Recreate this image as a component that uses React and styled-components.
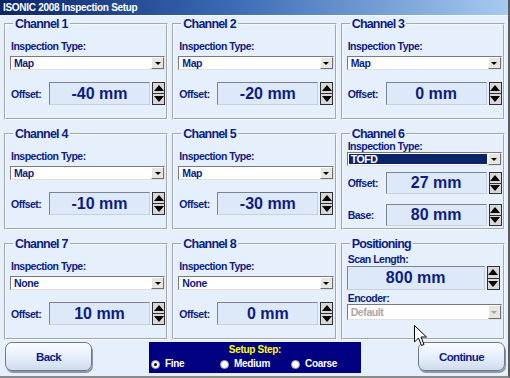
import React from 'react';
import styled, { createGlobalStyle } from 'styled-components';

const Global = createGlobalStyle`
  html, body { margin: 0; padding: 0; background: #e6effc; }
  body { width: 510px; height: 378px; overflow: hidden; font-family: "Liberation Sans", Arial, sans-serif; }
  * { box-sizing: border-box; }
`;

const NAVY = '#0c1c84';

const Window = styled.div`
  position: relative;
  width: 510px;
  height: 378px;
  display: flex;
  flex-direction: column;
  background: #e6effc;
  border-right: 2px solid #5a5a5a;
  border-bottom: 2px solid #8a8a8a;
`;

const TitleBar = styled.div`
  height: 16px;
  padding-left: 3px;
  background: linear-gradient(to right, #0a246a 0%, #3a6ab4 45%, #a6caf0 100%);
  color: #fff;
  font-size: 10px;
  letter-spacing: -0.3px;
  font-weight: bold;
  line-height: 16px;
  border-bottom: 1px solid #f4f8ff;
`;

const Grid = styled.div`
  display: grid;
  grid-template-columns: repeat(3, 1fr);
  grid-template-rows: repeat(3, 102px);
  column-gap: 4px;
  row-gap: 8px;
  padding: 2px 3px 0 4px;
`;

const Group = styled.fieldset`
  margin: 0;
  min-width: 0;
  padding: 0 1px 0 4px;
  border: 2px groove #f6f9ff;
  display: flex;
  flex-direction: column;
`;

const Legend = styled.legend`
  margin-left: 3px;
  padding: 0 2px;
  font-size: 12.5px;
  letter-spacing: -0.8px;
  line-height: 12px;
  font-weight: bold;
  color: ${NAVY};
`;

const Label = styled.div`
  padding-left: 1px;
  margin-top: ${p => p.$mt || 0}px;
  font-size: 10.5px;
  letter-spacing: -0.5px;
  line-height: 12px;
  font-weight: bold;
  color: ${NAVY};
  white-space: nowrap;
`;

const Select = styled.div`
  margin-top: ${p => p.$mt || 0}px;
  height: ${p => p.$h || 14}px;
  display: flex;
  align-items: stretch;
  background: #fff;
  border-top: 1px solid #7a7a7a;
  border-left: 1px solid #7a7a7a;
  border-right: 1px solid #e0e0e0;
  border-bottom: 1px solid #e0e0e0;
`;

const SelectText = styled.div`
  flex: 1;
  margin: 1px;
  padding-left: 2px;
  font-size: 10.5px;
  letter-spacing: -0.4px;
  line-height: ${p => p.$lh || 11}px;
  font-weight: bold;
  color: ${p => (p.$disabled ? '#a8a8a8' : p.$selected ? '#fff' : NAVY)};
  background: ${p => (p.$selected ? '#0a246a' : 'transparent')};
`;

const DropButton = styled.div`
  width: 13px;
  display: flex;
  align-items: center;
  justify-content: center;
  background: #e8e6e0;
  border-top: 1px solid #fff;
  border-left: 1px solid #fff;
  border-right: 1px solid #707070;
  border-bottom: 1px solid #707070;
  &::after {
    content: '';
    border-left: 3px solid transparent;
    border-right: 3px solid transparent;
    border-top: 3px solid ${p => (p.$disabled ? '#a0a0a0' : '#000')};
  }
`;

const ValueRow = styled.div`
  margin-top: ${p => p.$mt || 0}px;
  display: grid;
  grid-template-columns: ${p => (p.$label ? '37px 101px 13px' : '138px 13px')};
  column-gap: 2px;
  align-items: center;
`;

const ValueBox = styled.div`
  height: ${p => p.$h || 23}px;
  background: #dde8f8;
  border-top: 1px solid #7c8494;
  border-left: 1px solid #7c8494;
  border-right: 1px solid #c8d0dc;
  border-bottom: 1px solid #c8d0dc;
  display: flex;
  align-items: center;
  justify-content: center;
  font-size: 16px;
  font-weight: bold;
  color: ${NAVY};
`;

const Spinner = styled.div`
  height: ${p => p.$h || 23}px;
  display: flex;
  flex-direction: column;
  border: 1px solid #303030;
  background: #303030;
  gap: 1px;
`;

const SpinBtn = styled.div`
  flex: 1;
  display: flex;
  align-items: center;
  justify-content: center;
  background: #d8d8d8;
  &::after {
    content: '';
    border-left: 5px solid transparent;
    border-right: 5px solid transparent;
    ${p => (p.$down ? 'border-top: 6px solid #000;' : 'border-bottom: 6px solid #000;')}
  }
`;

const Bottom = styled.div`
  display: flex;
  justify-content: space-between;
  align-items: flex-start;
  padding: 2px 3px 0 5px;
`;

const Button = styled.div`
  width: 87px;
  height: 29px;
  border: 1px solid #6e7888;
  border-radius: 7px;
  background: linear-gradient(to bottom, #fbfdff 0%, #e6effc 50%, #cfdcee 100%);
  box-shadow: 1px 2px 0 #8f96a0;
  display: flex;
  align-items: center;
  justify-content: center;
  font-size: 11.5px;
  letter-spacing: -0.6px;
  font-weight: bold;
  color: ${NAVY};
`;

const StepPanel = styled.div`
  width: 212px;
  height: 31px;
  background: #000080;
  display: flex;
  flex-direction: column;
  padding: 2px 0 0 2px;
`;

const StepTitle = styled.div`
  text-align: center;
  font-size: 10px;
  letter-spacing: -0.3px;
  line-height: 11px;
  font-weight: bold;
  color: #ffff00;
  padding-right: 2px;
`;

const Radios = styled.div`
  margin-top: 3px;
  display: grid;
  grid-template-columns: 69px 71px auto;
`;

const RadioItem = styled.div`
  display: flex;
  align-items: center;
  gap: 5px;
  font-size: 10px;
  letter-spacing: -0.3px;
  line-height: 12px;
  font-weight: bold;
  color: #fff;
`;

const RadioDot = styled.span`
  width: 9px;
  height: 9px;
  border-radius: 50%;
  background: #fff;
  border: 1px solid #9a9a9a;
  display: flex;
  align-items: center;
  justify-content: center;
  &::after {
    content: '';
    width: 3px;
    height: 3px;
    border-radius: 50%;
    background: ${p => (p.$on ? '#000' : 'transparent')};
  }
`;

const Cursor = styled.svg`
  position: absolute;
  left: 414px;
  top: 325px;
`;

const SpinnerCtl = ({ h }) => (
  <Spinner $h={h}>
    <SpinBtn />
    <SpinBtn $down />
  </Spinner>
);

const Channel = ({ n, type, offset }) => (
  <Group>
    <Legend>Channel {n}</Legend>
    <Label $mt={10}>Inspection Type:</Label>
    <Select $mt={4}>
      <SelectText>{type}</SelectText>
      <DropButton />
    </Select>
    <ValueRow $label $mt={12}>
      <Label>Offset:</Label>
      <ValueBox>{offset} mm</ValueBox>
      <SpinnerCtl />
    </ValueRow>
  </Group>
);

export default function App() {
  return (
    <>
      <Global />
      <Window>
        <TitleBar>ISONIC 2008 Inspection Setup</TitleBar>
        <Grid>
          <Channel n={1} type="Map" offset="-40" />
          <Channel n={2} type="Map" offset="-20" />
          <Channel n={3} type="Map" offset="0" />
          <Channel n={4} type="Map" offset="-10" />
          <Channel n={5} type="Map" offset="-30" />
          <Group>
            <Legend>Channel 6</Legend>
            <Label>Inspection Type:</Label>
            <Select>
              <SelectText $selected>TOFD</SelectText>
              <DropButton />
            </Select>
            <ValueRow $label $mt={6}>
              <Label>Offset:</Label>
              <ValueBox $h={22}>27 mm</ValueBox>
              <SpinnerCtl h={22} />
            </ValueRow>
            <ValueRow $label $mt={10}>
              <Label>Base:</Label>
              <ValueBox $h={22}>80 mm</ValueBox>
              <SpinnerCtl h={22} />
            </ValueRow>
          </Group>
          <Channel n={7} type="None" offset="10" />
          <Channel n={8} type="None" offset="0" />
          <Group>
            <Legend>Positioning</Legend>
            <Label $mt={3}>Scan Length:</Label>
            <ValueRow $mt={1}>
              <ValueBox $h={24}>800 mm</ValueBox>
              <SpinnerCtl h={24} />
            </ValueRow>
            <Label $mt={2}>Encoder:</Label>
            <Select $h={16}>
              <SelectText $disabled $lh={13}>Default</SelectText>
              <DropButton $disabled />
            </Select>
          </Group>
        </Grid>
        <Bottom>
          <Button>Back</Button>
          <StepPanel>
            <StepTitle>Setup Step:</StepTitle>
            <Radios>
              <RadioItem><RadioDot $on />Fine</RadioItem>
              <RadioItem><RadioDot />Medium</RadioItem>
              <RadioItem><RadioDot />Coarse</RadioItem>
            </Radios>
          </StepPanel>
          <Button>Continue</Button>
        </Bottom>
        <Cursor width="14" height="22" viewBox="0 0 14 22">
          <path d="M0.5 0.5 L0.5 17 L4.5 13 L7.5 20.5 L10 19.5 L7 12 L12.5 12 Z" fill="#fff" stroke="#000" strokeWidth="1" strokeLinejoin="miter" />
        </Cursor>
      </Window>
    </>
  );
}
